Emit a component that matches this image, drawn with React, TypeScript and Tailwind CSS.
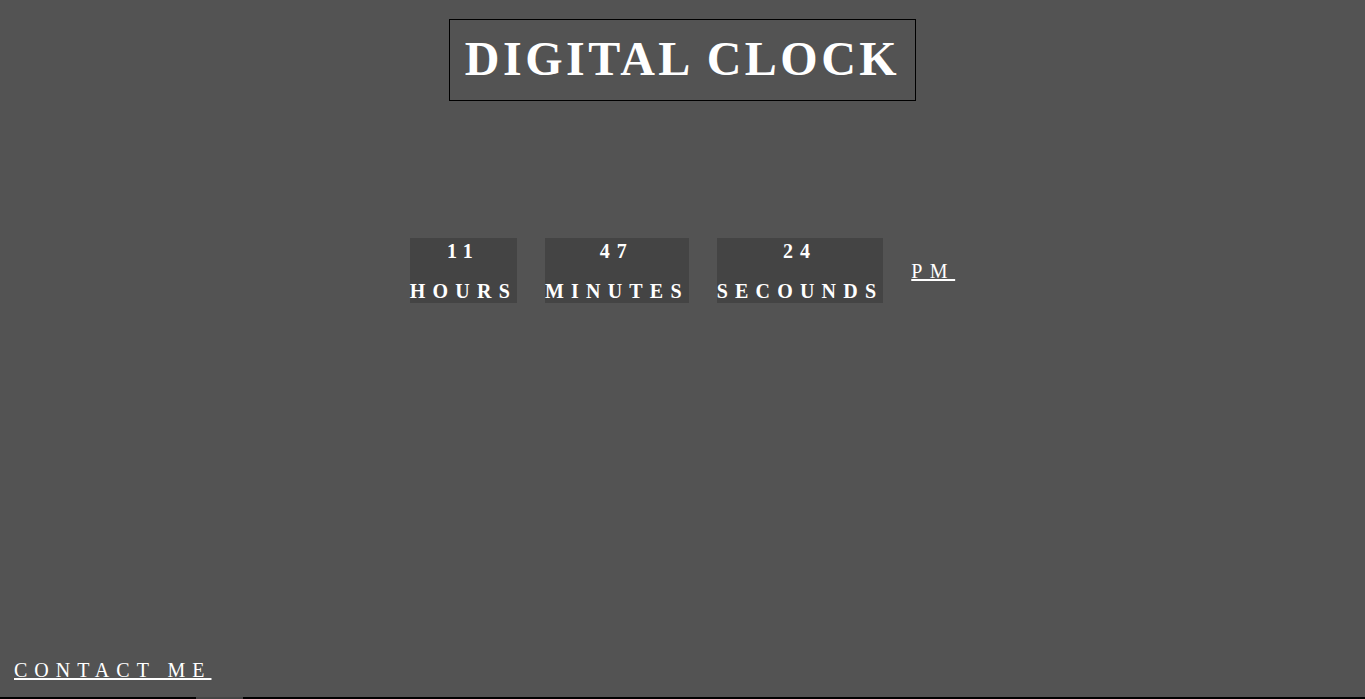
const units = [
  { value: '11', label: 'HOURS' },
  { value: '47', label: 'MINUTES' },
  { value: '24', label: 'SECOUNDS' },
];

export default function App() {
  return (
    <div
      className="flex h-[699px] w-full flex-col overflow-hidden bg-[#535353] text-white"
      style={{ fontFamily: '"Liberation Serif", "Times New Roman", serif' }}
    >
      {/* Title */}
      <div className="mt-[19px] flex justify-center">
        <h1 className="border border-black px-[15px] pt-[11px] pb-[14px] text-[48px] leading-[55px] font-bold tracking-[3.5px]">
          DIGITAL CLOCK
        </h1>
      </div>

      {/* Clock */}
      <div className="mt-[137px] flex items-center justify-center gap-[28px]">
        {units.map((u) => (
          <div key={u.label} className="flex flex-col items-center bg-[#444444] font-bold">
            <span className="text-[20px] leading-[26px] tracking-[7px]">{u.value}</span>
            <span className="mt-[15px] text-[20px] leading-[24px] tracking-[7.2px]">{u.label}</span>
          </div>
        ))}
        <a href="#" className="text-[20px] leading-[24px] tracking-[7.5px] underline">
          PM
        </a>
      </div>

      {/* Footer */}
      <div className="mt-auto px-[14px] pb-[13px]">
        <a href="#" className="text-[20px] leading-[23px] tracking-[7px] underline">
          CONTACT ME
        </a>
      </div>
      <div className="flex h-[2px] w-full bg-black">
        <div className="ml-[196px] h-full w-[47px] bg-[#444444]" />
      </div>
    </div>
  );
}
